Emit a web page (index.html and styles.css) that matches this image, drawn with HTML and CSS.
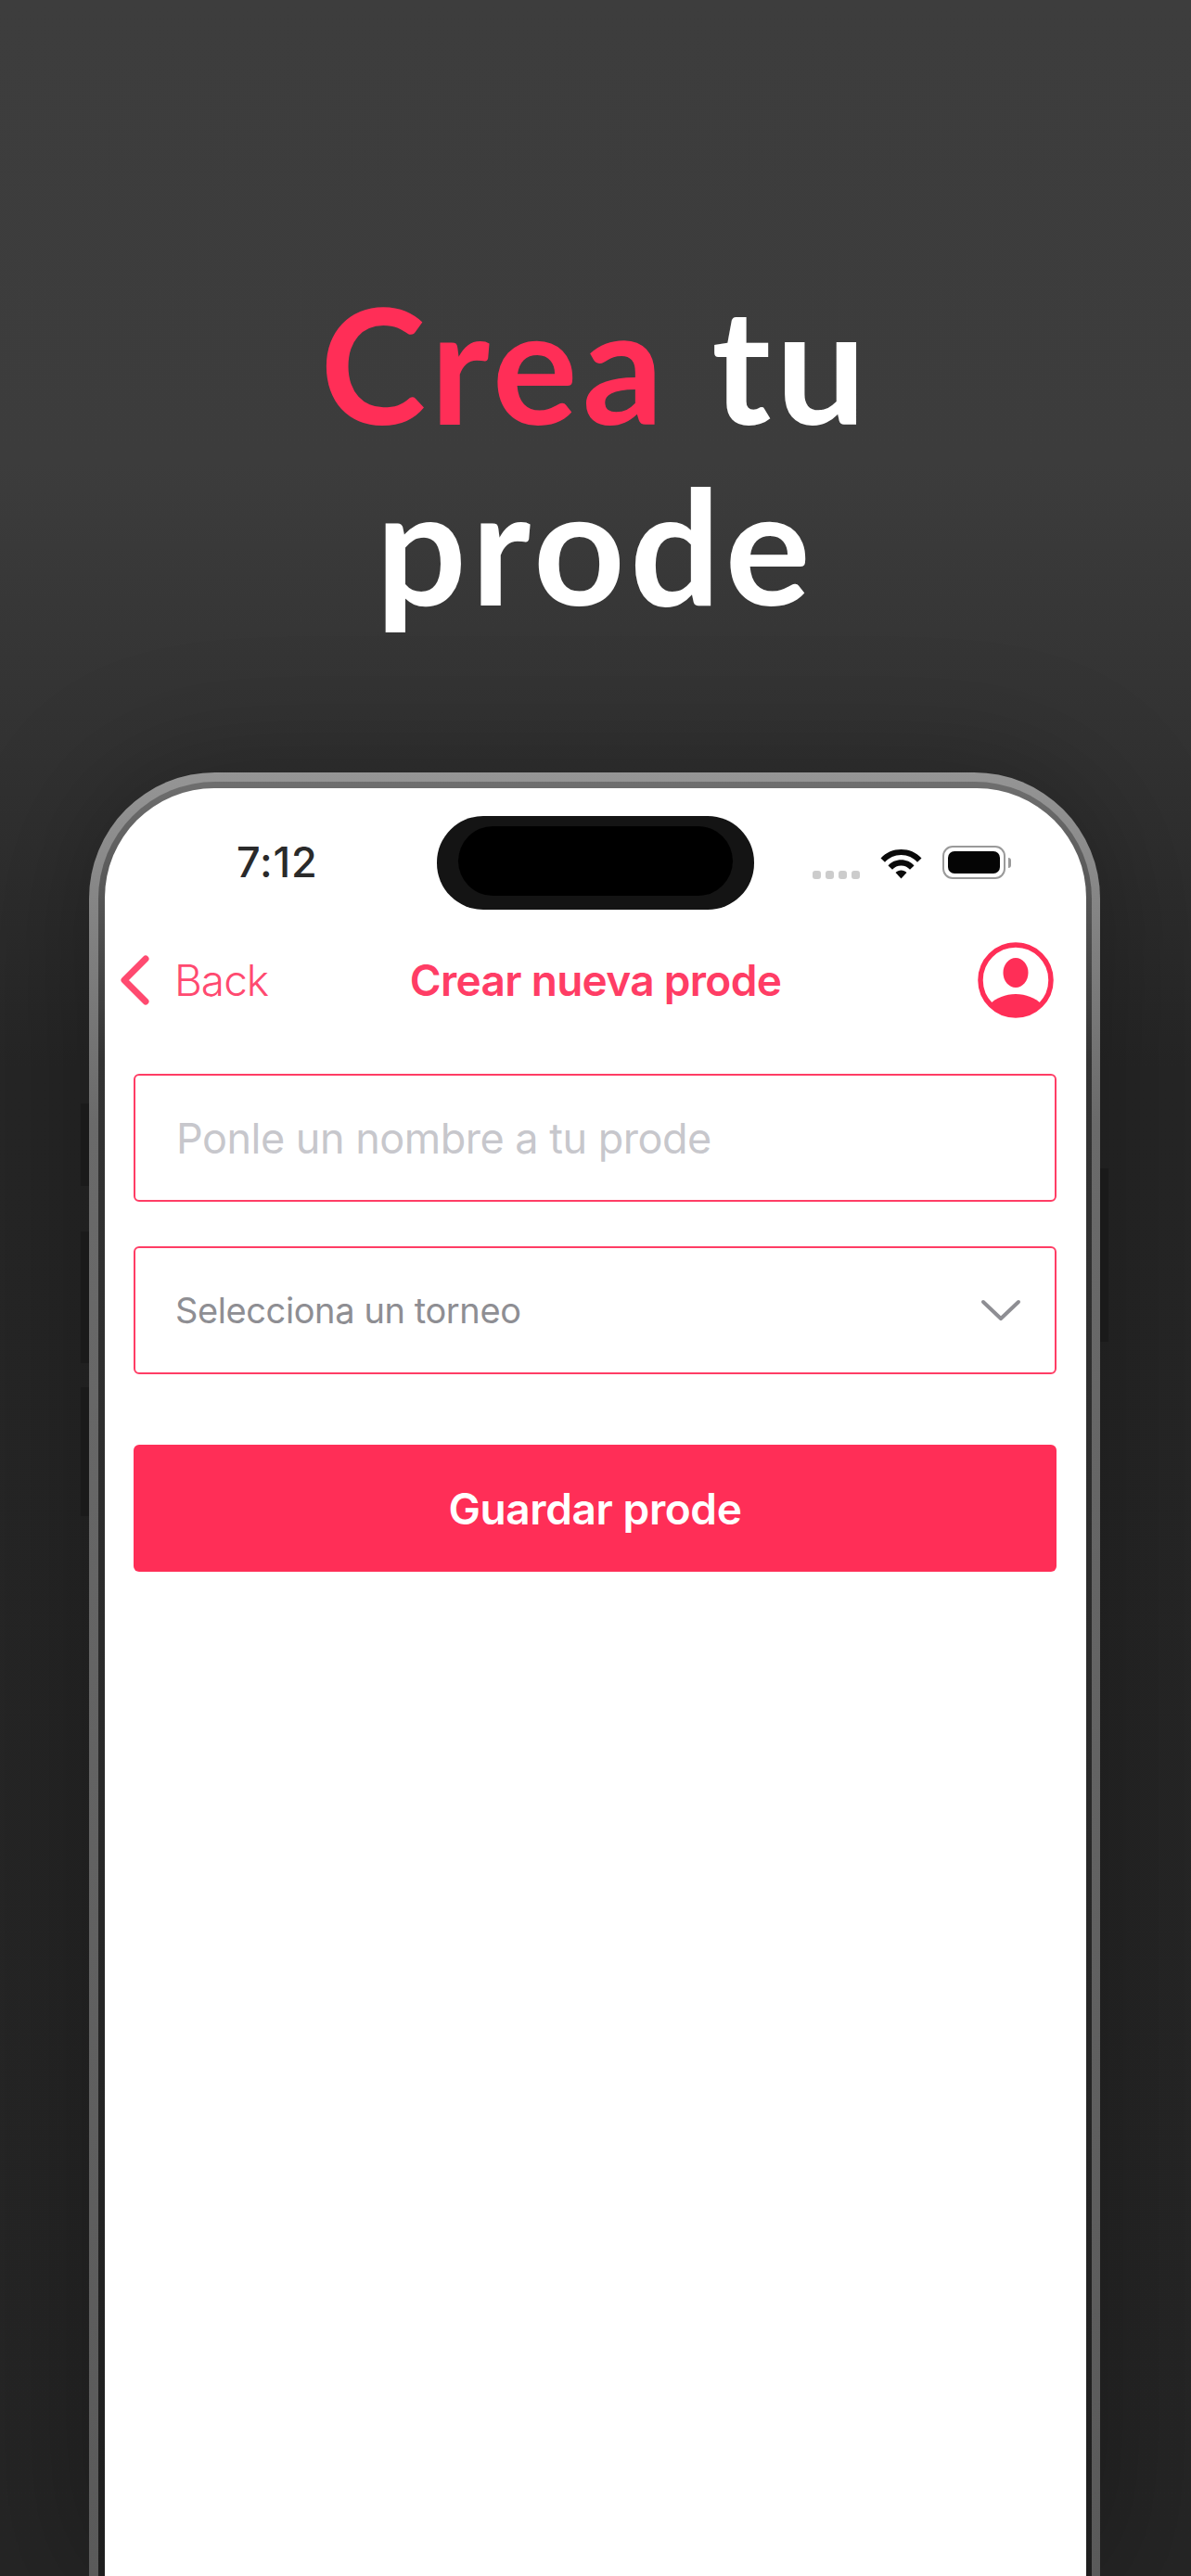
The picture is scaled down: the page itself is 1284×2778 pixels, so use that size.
FILE: index.html
```html
<!DOCTYPE html>
<html lang="es">
<head>
  <meta charset="UTF-8">
  <meta name="viewport" content="width=device-width, initial-scale=1.0">
  <title>Crea tu prode</title>
  <link rel="stylesheet" href="styles.css">
</head>
<body>
  <h1 class="headline"><span class="accent">Crea</span> tu<br>prode</h1>

  <div class="phone">
    <span class="side-btn btn-mute"></span>
    <span class="side-btn btn-up"></span>
    <span class="side-btn btn-down"></span>
    <span class="side-btn btn-power"></span>
    <div class="phone-inner">
      <div class="screen">
        <div class="status-bar">
          <span class="time">7:12</span>
          <div class="island"><div class="island-core"></div></div>
          <div class="status-icons">
            <div class="signal"><i></i><i></i><i></i><i></i></div>
            <svg class="wifi" viewBox="0 0 47 35" width="47" height="35">
              <path d="M1.5 12.5C7.5 6 15 3 23.5 3S39.500 6 45.500 12.500L41 16.800C36.500 11.800 30.500 9 23.500 9S10.500 11.800 6 16.800Z" fill="#0a0a0a"/>
              <path d="M9.500 20.500C13 16.500 18 14.300 23.500 14.300S34 16.500 37.500 20.500L33 24.800C30.500 22 27.200 20.500 23.500 20.500S16.500 22 14 24.800Z" fill="#0a0a0a"/>
              <path d="M17.500 28C19 26.500 21.200 25.600 23.500 25.600S28 26.500 29.500 28L23.500 34.500Z" fill="#0a0a0a"/>
            </svg>
            <div class="battery"><div class="battery-fill"></div></div>
            <span class="battery-cap"></span>
          </div>
        </div>

        <div class="nav">
          <div class="nav-back">
            <svg class="back-icon" viewBox="0 0 32 54" width="32" height="54">
              <path d="M28 4L5 27L28 50" fill="none" stroke="#ff4a70" stroke-width="7" stroke-linecap="round" stroke-linejoin="round"/>
            </svg>
            <span class="back-label">Back</span>
          </div>
          <div class="nav-title">Crear nueva prode</div>
          <svg class="avatar" viewBox="0 0 82 82" width="82" height="82">
            <circle cx="41" cy="41" r="38" fill="#fff" stroke="#ff2e57" stroke-width="5.500"/>
            <ellipse cx="41" cy="33" rx="13.500" ry="16" fill="#ff2e57"/>
            <path d="M13 67C20 60 30 56 41 56S62 60 69 67C62 75 52 79.500 41 79.500S20 75 13 67Z" fill="#ff2e57"/>
          </svg>
        </div>

        <form class="form">
          <div class="field field-name">Ponle un nombre a tu prode</div>
          <div class="field field-select">
            <span>Selecciona un torneo</span>
            <svg class="select-icon" viewBox="0 0 44 26" width="44" height="26">
              <path d="M3 4L22 22L41 4" fill="none" stroke="#8e8e93" stroke-width="4" stroke-linecap="round" stroke-linejoin="round"/>
            </svg>
          </div>
          <div class="save-btn">Guardar prode</div>
        </form>
      </div>
    </div>
  </div>
</body>
</html>
```

FILE: styles.css
```css
html, body {
  height: 2778px;
}
body {
  margin: 0;
  overflow: hidden;
  background: linear-gradient(to bottom, #3d3d3d 0, #3c3c3c 500px, #262626 1150px, #252525 2778px);
  font-family: 'Inter', 'Liberation Sans', sans-serif;
}
.headline {
  margin: 0;
  padding-top: 294px;
  height: 833px;
  box-sizing: border-box;
  text-align: center;
  font-family: 'Lato', 'Open Sans', sans-serif;
  font-size: 172px;
  font-weight: 700;
  line-height: 195px;
  letter-spacing: 5.200px;
  color: #fff;
}
.accent {
  color: #ff2e57;
}

/* phone frame */
.phone {
  position: relative;
  width: 1090px;
  height: 1945px;
  margin-left: 96px;
  padding: 10px 9px 0 10px;
  box-sizing: border-box;
  border-radius: 136px 136px 0 0;
  background: linear-gradient(to bottom, #959595 0, #6a6a6a 380px, #5a5a5a 100%);
  box-shadow: 0 0 140px rgba(0, 0, 0, 0.3);
}
.phone-inner {
  height: 100%;
  padding: 7px 6px 0 7px;
  box-sizing: border-box;
  border-radius: 126px 126px 0 0;
  background: linear-gradient(to bottom, #6e6e6e 0, #333 300px, #1e1e1e 100%);
}
.screen {
  height: 100%;
  border-radius: 118px 118px 0 0;
  background: #fff;
  overflow: hidden;
}
.side-btn {
  position: absolute;
  width: 9px;
  background: #1a1a1a;
}
.btn-mute { left: -9px; top: 357px; height: 89px; }
.btn-up { left: -9px; top: 495px; height: 142px; }
.btn-down { left: -9px; top: 663px; height: 139px; }
.btn-power { right: -9px; top: 427px; height: 187px; }

/* status bar */
.status-bar {
  display: flex;
  align-items: flex-start;
  height: 150px;
  padding-top: 30px;
  box-sizing: border-box;
}
.time {
  width: 358px;
  padding: 28px 0 0 142px;
  box-sizing: border-box;
  font-size: 45px;
  font-weight: 500;
  line-height: 44px;
  letter-spacing: 0.800px;
  color: #2a2a2a;
}
.island {
  width: 342px;
  height: 101px;
  padding: 11px 23px 15px;
  box-sizing: border-box;
  border-radius: 50px;
  background: #141414;
}
.island-core {
  height: 100%;
  border-radius: 38px;
  background: #000;
}
.status-icons {
  display: flex;
  align-items: flex-end;
  margin-left: 63px;
  padding-top: 32px;
}
.signal {
  display: flex;
  gap: 5px;
  margin-right: 21px;
}
.signal i {
  width: 9px;
  height: 9px;
  border-radius: 3px;
  background: #ccc;
}
.wifi {
  display: block;
  margin-right: 21px;
}
.battery {
  width: 68px;
  height: 36px;
  padding: 4px;
  box-sizing: border-box;
  border: 2px solid #9a9a9a;
  border-radius: 11px;
}
.battery-fill {
  height: 100%;
  border-radius: 7px;
  background: #050505;
}
.battery-cap {
  align-self: center;
  width: 3px;
  height: 11px;
  margin-left: 3px;
  border-radius: 0 3px 3px 0;
  background: #9a9a9a;
}

/* nav row */
.nav {
  display: grid;
  grid-template-columns: 1fr auto 1fr;
  align-items: center;
  height: 82px;
  padding: 16px 16px 0;
}
.nav-back {
  display: flex;
  align-items: center;
  gap: 27px;
  color: #ff4a70;
}
.back-label {
  font-size: 46px;
  font-weight: 300;
  letter-spacing: -1px;
}
.nav-title {
  font-size: 46px;
  font-weight: 600;
  letter-spacing: -0.700px;
  color: #ff3d65;
}
.avatar {
  justify-self: end;
  margin-right: 19px;
}

/* form */
.form {
  display: flex;
  flex-direction: column;
  padding: 60px 32px 0 31px;
}
.field {
  height: 138px;
  box-sizing: border-box;
  border: 2.500px solid #ff3d65;
  border-radius: 6px;
  display: flex;
  align-items: center;
  justify-content: space-between;
}
.field-name {
  padding-left: 44px;
  font-size: 45px;
  font-weight: 400;
  letter-spacing: -0.500px;
  color: #c7c7cc;
}
.field-select {
  margin-top: 48px;
  padding: 0 36px 0 43px;
  font-size: 38px;
  letter-spacing: -0.400px;
  color: #8e8e93;
}
.save-btn {
  margin-top: 76px;
  height: 137px;
  border-radius: 6px;
  background: #ff2e57;
  display: flex;
  align-items: center;
  justify-content: center;
  font-size: 46px;
  font-weight: 600;
  letter-spacing: -0.400px;
  color: #fff;
}
```
